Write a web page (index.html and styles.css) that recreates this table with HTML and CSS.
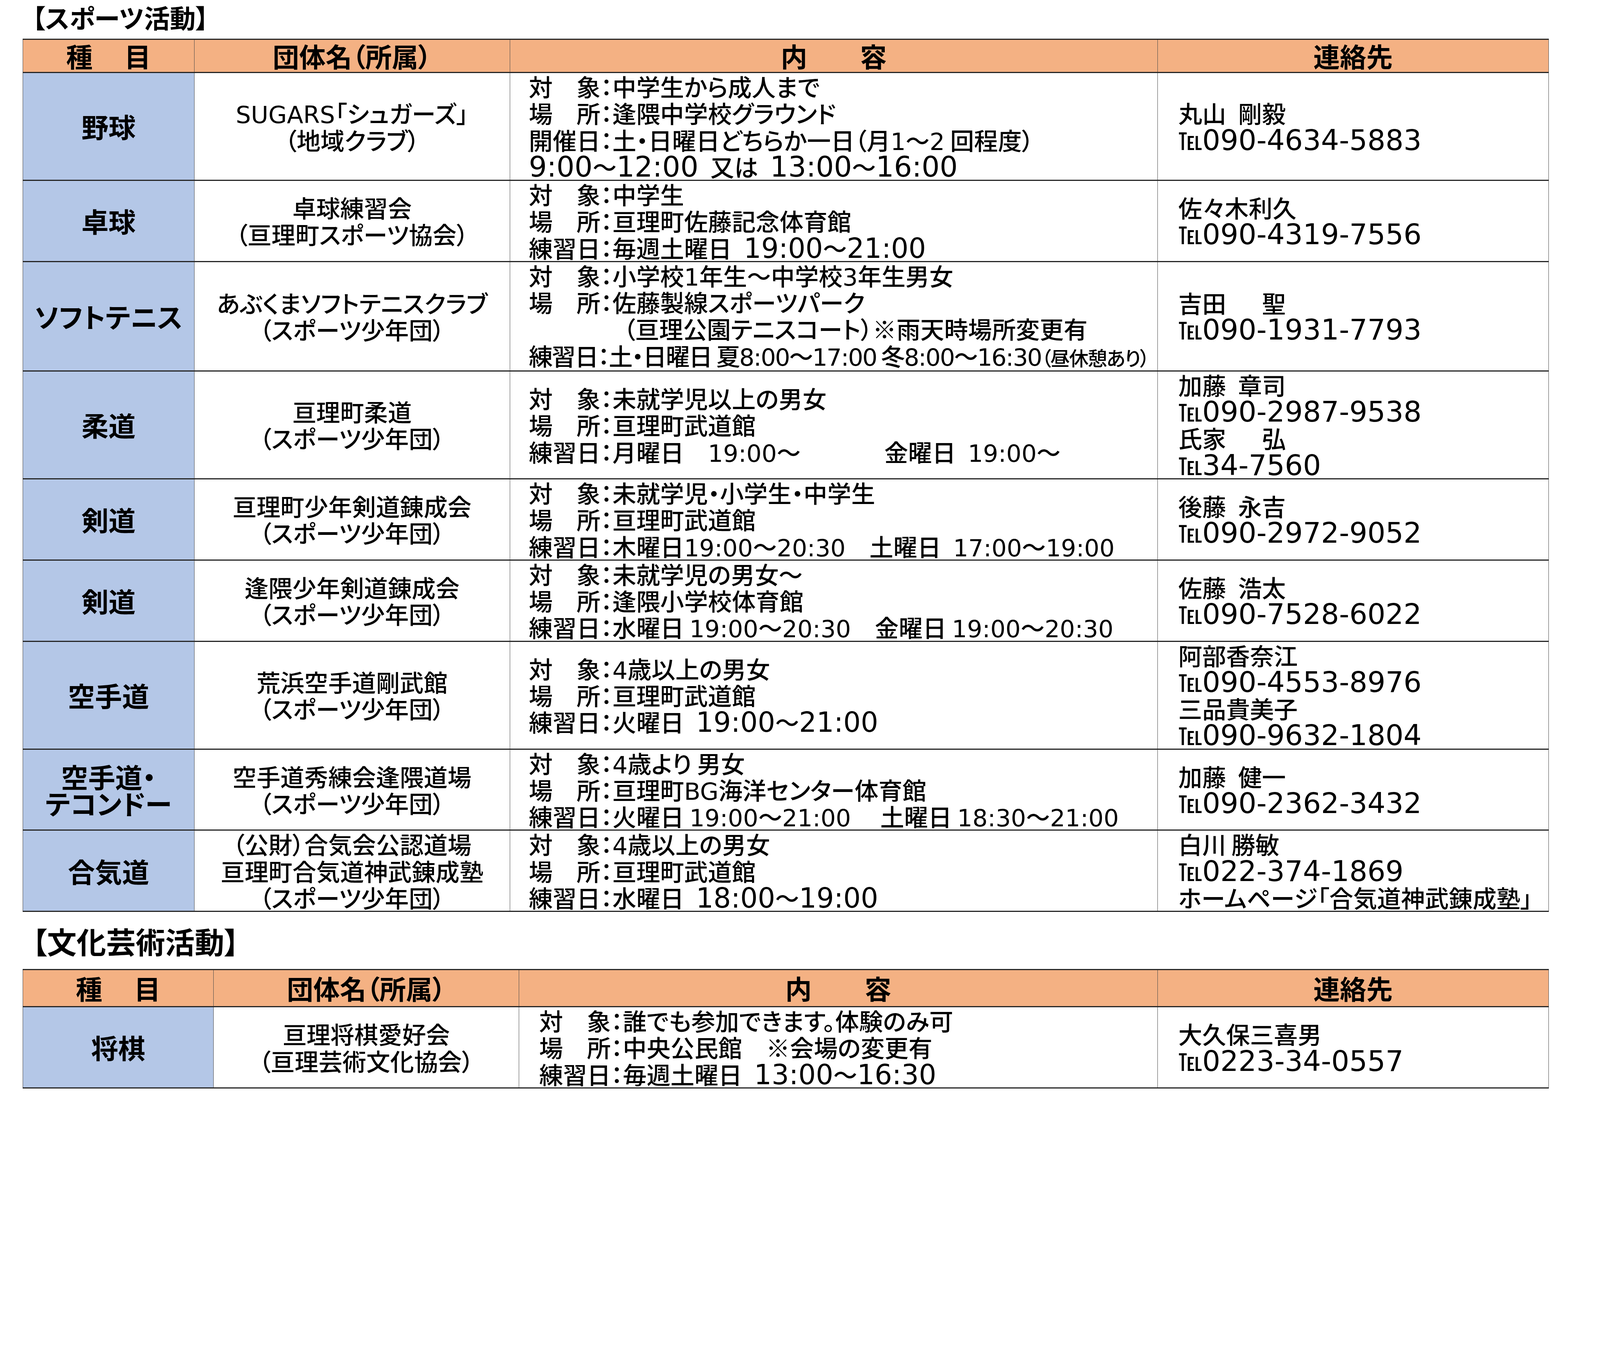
FILE: index.html
```html
<!DOCTYPE html>
<html lang="ja">
<head>
<meta charset="utf-8">
<title>スポーツ・文化芸術活動</title>
<link rel="stylesheet" href="styles.css">
</head>
<body>
<div class="page">
  <h2 class="title t-sports">【スポーツ活動】</h2>
  <table class="tbl">
    <colgroup>
      <col class="c1a"><col class="c2a"><col class="c3a"><col class="c4">
    </colgroup>
    <thead>
      <tr class="head"><th>種　&thinsp;目</th><th>団体名（所属）</th><th>内　　容</th><th>連絡先</th></tr>
    </thead>
    <tbody>
      <tr>
        <td class="cat">野球</td>
        <td class="grp"><span class="n">SUGARS</span>「シュガーズ」<br>（地域クラブ）</td>
        <td class="con">対　象：中学生から成人まで<br>場　所：逢隈中学校グラウンド<br>開催日：土・日曜日どちらか一日（月<span class="n">1</span>～<span class="n">2</span> 回程度）<br><span class="n big">9:00</span>～<span class="n big">12:00</span>&ensp;又は&ensp;<span class="n big">13:00</span>～<span class="n big">16:00</span></td>
        <td class="tel">丸山&ensp;剛毅<br>℡<span class="n big">090-4634-5883</span></td>
      </tr>
      <tr>
        <td class="cat">卓球</td>
        <td class="grp">卓球練習会<br>（亘理町スポーツ協会）</td>
        <td class="con">対　象：中学生<br>場　所：亘理町佐藤記念体育館<br>練習日：毎週土曜日&ensp;<span class="n mid">19:00</span>～<span class="n mid">21:00</span></td>
        <td class="tel">佐々木利久<br>℡<span class="n big">090-4319-7556</span></td>
      </tr>
      <tr>
        <td class="cat">ソフトテニス</td>
        <td class="grp">あぶくまソフトテニスクラブ<br>（スポーツ少年団）</td>
        <td class="con">対　象：小学校<span class="n">1</span>年生～中学校<span class="n">3</span>年生男女<br>場　所：佐藤製線スポーツパーク<br><span class="indent">（亘理公園テニスコート）※雨天時場所変更有</span><br><span class="tight">練習日：土・日曜日 夏<span class="n">8:00</span>～<span class="n">17:00</span> 冬<span class="n">8:00</span>～<span class="n">16:30</span><span class="sm">（昼休憩あり）</span></span></td>
        <td class="tel">吉田　&ensp;聖<br>℡<span class="n big">090-1931-7793</span></td>
      </tr>
      <tr>
        <td class="cat">柔道</td>
        <td class="grp">亘理町柔道<br>（スポーツ少年団）</td>
        <td class="con">対　象：未就学児以上の男女<br>場　所：亘理町武道館<br>練習日：月曜日　<span class="n">19:00</span>～　　　&ensp;金曜日&ensp;<span class="n">19:00</span>～</td>
        <td class="tel">加藤&ensp;章司<br>℡<span class="n big">090-2987-9538</span><br>氏家　&ensp;弘<br>℡<span class="n big">34-7560</span></td>
      </tr>
      <tr>
        <td class="cat">剣道</td>
        <td class="grp">亘理町少年剣道錬成会<br>（スポーツ少年団）</td>
        <td class="con">対　象：未就学児・小学生・中学生<br>場　所：亘理町武道館<br>練習日：木曜日<span class="n">19:00</span>～<span class="n">20:30</span>　土曜日&ensp;<span class="n">17:00</span>～<span class="n">19:00</span></td>
        <td class="tel">後藤&ensp;永吉<br>℡<span class="n big">090-2972-9052</span></td>
      </tr>
      <tr>
        <td class="cat">剣道</td>
        <td class="grp">逢隈少年剣道錬成会<br>（スポーツ少年団）</td>
        <td class="con">対　象：未就学児の男女～<br>場　所：逢隈小学校体育館<br>練習日：水曜日 <span class="n">19:00</span>～<span class="n">20:30</span>　金曜日 <span class="n">19:00</span>～<span class="n">20:30</span></td>
        <td class="tel">佐藤&ensp;浩太<br>℡<span class="n big">090-7528-6022</span></td>
      </tr>
      <tr>
        <td class="cat">空手道</td>
        <td class="grp">荒浜空手道剛武館<br>（スポーツ少年団）</td>
        <td class="con">対　象：<span class="n">4</span>歳以上の男女<br>場　所：亘理町武道館<br>練習日：火曜日&ensp;<span class="n mid">19:00</span>～<span class="n mid">21:00</span></td>
        <td class="tel">阿部香奈江<br>℡<span class="n big">090-4553-8976</span><br>三品貴美子<br>℡<span class="n big">090-9632-1804</span></td>
      </tr>
      <tr>
        <td class="cat">空手道・<br>テコンドー</td>
        <td class="grp">空手道秀練会逢隈道場<br>（スポーツ少年団）</td>
        <td class="con">対　象：<span class="n">4</span>歳より 男女<br>場　所：亘理町<span class="n">BG</span>海洋センター体育館<br>練習日：火曜日 <span class="n">19:00</span>～<span class="n">21:00</span>　 土曜日 <span class="n">18:30</span>～<span class="n">21:00</span></td>
        <td class="tel">加藤&ensp;健一<br>℡<span class="n big">090-2362-3432</span></td>
      </tr>
      <tr>
        <td class="cat">合気道</td>
        <td class="grp">（公財）合気会公認道場<br>亘理町合気道神武錬成塾<br>（スポーツ少年団）</td>
        <td class="con">対　象：<span class="n">4</span>歳以上の男女<br>場　所：亘理町武道館<br>練習日：水曜日&ensp;<span class="n mid">18:00</span>～<span class="n mid">19:00</span></td>
        <td class="tel">白川 勝敏<br>℡<span class="n big">022-374-1869</span><br>ホームページ「合気道神武錬成塾」</td>
      </tr>
    </tbody>
  </table>

  <h2 class="title t-culture">【文化芸術活動】</h2>
  <table class="tbl">
    <colgroup>
      <col class="c1b"><col class="c2b"><col class="c3b"><col class="c4">
    </colgroup>
    <thead>
      <tr class="head head2"><th>種　&thinsp;目</th><th>団体名（所属）</th><th>内　　容</th><th>連絡先</th></tr>
    </thead>
    <tbody>
      <tr>
        <td class="cat">将棋</td>
        <td class="grp">亘理将棋愛好会<br>（亘理芸術文化協会）</td>
        <td class="con con2">対　象：誰でも参加できます。体験のみ可<br>場　所：中央公民館　※会場の変更有<br>練習日：毎週土曜日&ensp;<span class="n mid">13:00</span>～<span class="n mid">16:30</span></td>
        <td class="tel">大久保三喜男<br>℡<span class="n big">0223-34-0557</span></td>
      </tr>
    </tbody>
  </table>
</div>
</body>
</html>
```

FILE: styles.css
```css
html, body {
  margin: 0;
  padding: 0;
  background: #ffffff;
}

body {
  font-family: "Noto Sans CJK JP", "Noto Sans", sans-serif;
  font-feature-settings: "palt" 1;
  font-weight: 500;
  color: #000000;
}

.page {
  padding-left: 57.9px;
  width: 3906px;
}

.title {
  margin: 0;
  padding-left: 24.8px;
  font-weight: 700;
  white-space: nowrap;
}

.t-sports {
  font-size: 66.1px;
  height: 99.2px;
  line-height: 87.6px;
}

.t-culture {
  font-size: 75.6px;
  height: 145.4px;
  line-height: 148.8px;
}

.tbl {
  border-collapse: collapse;
  table-layout: fixed;
  width: 3906.4px;
}

.c1a { width: 438.8px; }
.c2a { width: 808.2px; }
.c3a { width: 1657.8px; }
.c1b { width: 488.4px; }
.c2b { width: 781.8px; }
.c3b { width: 1634.6px; }
.c4  { width: 1001.6px; }

.tbl th,
.tbl td {
  border-top: 3.3px solid #262626;
  border-bottom: 3.3px solid #262626;
  border-left: 1.65px solid #4a4a4a;
  border-right: 1.65px solid #4a4a4a;
  padding: 0;
  font-size: 61.15px;
  line-height: 68.26px;
  vertical-align: middle;
  white-space: nowrap;
}

.tbl th {
  background: #f4b183;
  font-size: 67.8px;
  font-weight: 700;
  text-align: center;
  height: 81.8px;
}

.head2 th {
  height: 92.6px;
}

.cat {
  background: #b4c7e7;
  text-align: center;
  font-size: 69.4px !important;
  font-weight: 700;
}

.grp {
  text-align: center;
}

.con {
  padding-left: 47.9px !important;
}

.con2 {
  padding-left: 51.2px !important;
}

.tel {
  padding-left: 52.9px !important;
}

.n {
  font-family: "DejaVu Sans", "Noto Sans", sans-serif;
  font-feature-settings: normal;
  font-weight: 400;
  line-height: 0;
}

.big {
  font-size: 1.19em;
}

.mid {
  font-size: 1.15em;
}

.indent {
  padding-left: 242px;
}

.tight {
  letter-spacing: -2.3px;
}

.sm {
  font-size: 0.82em;
}
```
